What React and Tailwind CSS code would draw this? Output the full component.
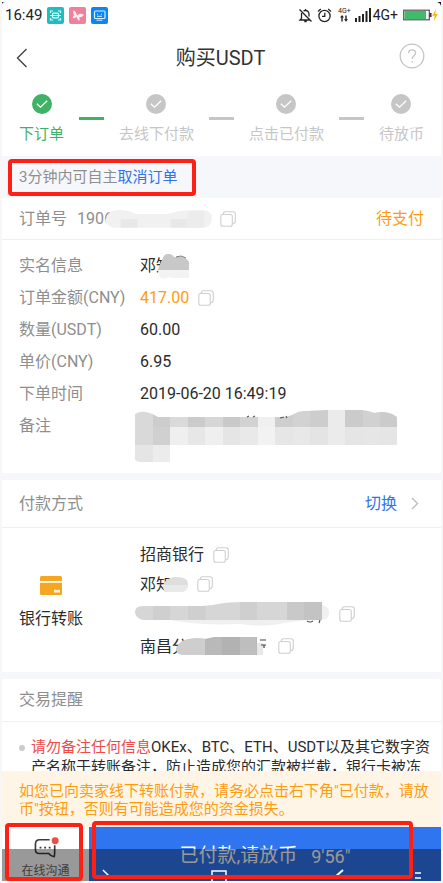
import React from 'react';

const steps = [
    { label: '下订单', done: true },
    { label: '去线下付款', done: false },
    { label: '点击已付款', done: false },
    { label: '待放币', done: false },
];

function StatusBar() {
    return (
        <div className="relative flex h-[30px] items-center justify-between pl-[3px] pr-[2px] text-[#222222]">
            <svg className="absolute left-0 top-[2px]" width="3" height="3" viewBox="0 0 3 3">
                <path d="M0 0h3Q0 0 0 3z" fill="#111" />
            </svg>
            <svg className="absolute right-0 top-[2px]" width="4" height="5" viewBox="0 0 4 5">
                <path d="M0 0h4v5Q4 1 0 0z" fill="#111" />
            </svg>
            <div className="flex items-center gap-[5px]">
                <span className="text-[15px]">16:49</span>
                <svg width="17" height="17" viewBox="0 0 17 17" fill="none">
                    <rect width="17" height="17" rx="2" fill="#1fbcc0" />
                    <path d="M3.5 6V4H6M11 4h2.500V6M13.500 11v2H11M6 13H3.500V11" stroke="#d9ffff" strokeWidth="1.200" />
                    <rect x="5.500" y="6.200" width="6" height="4.600" rx="1" stroke="#d9ffff" strokeWidth="1.200" />
                    <path d="M3 8.500h11" stroke="#d9ffff" strokeWidth="1" />
                </svg>
                <svg width="17" height="17" viewBox="0 0 17 17">
                    <rect width="17" height="17" rx="2" fill="#f0819d" />
                    <path d="M8 8.500C7.500 6 6 3.500 4.800 3.500c-1 1-.8 3.500.8 4.800-1.800.5-2.300 1.700-1.500 2.700 1.200.8 2.700 0 3.500-1.200.5 2 1.500 4 2.700 3.700.9-.8.2-2.200-.3-3.200 2.500 0 4.500-1.300 4.700-2.900-2.300-.9-4.700-.9-6.700 1.100z" fill="#ffeef3" />
                </svg>
                <svg width="17" height="17" viewBox="0 0 17 17" fill="none">
                    <rect width="17" height="17" rx="2" fill="#0c86f4" />
                    <rect x="3.500" y="4" width="10.500" height="7.500" rx="1" stroke="#d8efff" strokeWidth="1.200" />
                    <path d="M6 7.200h1M10 7.200h1M6 9.300h5M5.500 13.200h6" stroke="#d8efff" strokeWidth="1" />
                </svg>
            </div>
            <div className="flex items-center">
                <svg width="15" height="15" viewBox="0 0 15 15" fill="none" stroke="#222" strokeWidth="1.300">
                    <path d="M3.500 5v5.500L2 12h10M11 8.500V6.200C11 4 9.500 2.500 7.500 2.500c-.8 0-1.500.2-2 .6M7.500 1v1.500M6.300 13.500h2.400M1.500 1.500l12 12" />
                </svg>
                <svg className="ml-1" width="15" height="15" viewBox="0 0 15 15" fill="none" stroke="#222" strokeWidth="1.300">
                    <circle cx="7.500" cy="8" r="5.600" />
                    <path d="M7.800 4.800v3.500H5M1 3.500L3.800 1M14 3.500L11.200 1" />
                </svg>
                <div className="ml-[6px] flex flex-col items-center">
                    <span className="text-[7px] leading-[7px]">4G+</span>
                    <svg width="8" height="7" viewBox="0 0 8 7" fill="#222">
                        <path d="M2 0l2 2.500H2.700V6.500H1.300V2.500H0zM6 6.800L4 4.200h1.300V.5h1.400v3.700H8z" />
                    </svg>
                </div>
                <svg className="ml-[4px]" width="16" height="14" viewBox="0 0 16 14" fill="#222">
                    <path d="M0 10h2v4H0zM3.500 8h2v6h-2zM7 6h2v8H7zM10.500 3h2v11h-2zM14 0h2v14h-2z" />
                </svg>
                <span className="ml-[2px] text-[14px]">4G+</span>
                <svg className="ml-[5px]" width="36" height="12" viewBox="0 0 36 12">
                    <rect x=".7" y="1.200" width="25.600" height="9.600" fill="#fff" stroke="#555" strokeWidth="1.200" />
                    <rect x="1.500" y="2" width="21.500" height="8" fill="#3fbb6b" />
                    <rect x="26.500" y="4" width="2" height="4" fill="#333" />
                    <path d="M33 0l-4 6.800h2.600L30.800 12 35 5h-2.700z" fill="#fbb917" />
                </svg>
            </div>
        </div>
    );
}

function CopyButton() {
    return (
        <button type="button" aria-label="复制" className="shrink-0">
            <svg width="16" height="16" viewBox="0 0 16 16" fill="none" stroke="#cfcfcf" strokeWidth="1.100">
                <rect x=".8" y="3.500" width="11.500" height="11.700" rx="2" />
                <path d="M3.200 3.200C3.300 1.500 4 .8 5.500.8H13c1.500 0 2.300.8 2.300 2.300v6.400c0 1.800-.8 3-2.600 3.300" />
            </svg>
        </button>
    );
}

function StepIcon({ done }) {
    return (
        <svg width="20" height="20" viewBox="0 0 20 20" fill="none">
            <circle cx="10" cy="10" r="10" fill={done ? '#3fb266' : '#c6c6c6'} />
            <path d="M4.800 9.800l3.700 3.400L15.200 6.800" stroke="#fff" strokeWidth="1.300" />
        </svg>
    );
}

function NameMask() {
    return (
        <svg className="relative -ml-[14px]" width="31" height="26" viewBox="0 0 31 26">
            <path d="M0 17C1 12 3 9 4 7 5 3 7 1 10 1s5 1 6 3h8c4 1 6 3 7 5v8z" fill="#c8c8c8" />
            <path d="M18 4l5-1 5 2" fill="none" stroke="#555" strokeWidth=".8" />
            <path d="M0 17h31v8H14c-2 0-2-1-3-1-1 2-9 2-10-1z" fill="#f3f3f3" />
        </svg>
    );
}

function RemarkMask() {
    const top = ['#d9d9d9', '#cdcdcd', '#dadada', '#cbcbcb', '#d6d6d6', '#c9c9c9', '#d2d2d2', '#f0f0f0', '#cecece', '#d2d2d2', '#cdcdcd', '#ebebeb', '#cbcbcb', '#d1d1d1', '#cbcbcb'];
    const middle = ['#d9d9d9', '#d0d0d0', '#efefef', '#e7e7e7', '#efefef', '#e5e5e5', '#e9e9e9', '#f2f2f2', '#e6e6e6', '#e8e8e8', '#e4e4e4', '#ebebeb', '#e5e5e5', '#e6e6e6', '#e5e5e5'];
    return (
        <svg className="-ml-[5px]" width="263" height="52" viewBox="0 0 263 52">
            <clipPath id="remark">
                <path d="M0 4Q5 1 11 2t12 5h127c8-1 10-6 20-6l22-1h35q8 1 12 3 14-3 23 4v28H35v17H5q-5-1-5-3z" />
            </clipPath>
            <g clipPath="url(#remark)" shapeRendering="crispEdges">
                {top.map((color, i) => <rect key={i} x={i * 17.5} y="0" width="17.500" height="17" fill={color} />)}
                {middle.map((color, i) => <rect key={i} x={i * 17.5} y="17" width="17.500" height="18" fill={color} />)}
                <rect x="0" y="35" width="17.500" height="17" fill="#e5e5e5" />
                <rect x="17.500" y="35" width="17.500" height="17" fill="#ececec" />
            </g>
            <path d="M112 7l2-1M118 7l2-1M145 8l4-1M151 6l1 2" stroke="#555" strokeWidth="1.200" />
        </svg>
    );
}

function Row({ label, children }) {
    return (
        <div className="flex">
            <dt className="w-[121px] shrink-0 text-[#8e8e8e]">{label}</dt>
            <dd className="flex items-center text-[#2b2b2b]">{children}</dd>
        </div>
    );
}

function SystemNav() {
    return (
        <div className="pointer-events-none absolute inset-x-0 bottom-0 flex h-8 items-end justify-between overflow-hidden bg-black/40 pl-[18px] pr-[20px]">
            <svg width="10" height="5" viewBox="0 0 10 5" fill="none">
                <path d="M1 5Q5-1 9 5" stroke="#fff" strokeWidth="2" />
            </svg>
            <svg width="10" height="12" viewBox="0 0 10 12" fill="none">
                <path d="M2 1l6 6" stroke="#fff" strokeWidth="1.500" />
            </svg>
            <svg className="ml-7" width="16" height="12" viewBox="0 0 16 12" fill="none">
                <path d="M1 12V2h14v10" stroke="#fff" strokeWidth="1.500" />
            </svg>
            <svg className="ml-9" width="10" height="12" viewBox="0 0 10 12" fill="none">
                <path d="M9 1L1 8" stroke="#fff" strokeWidth="2" />
            </svg>
            <svg width="6" height="10" viewBox="0 0 6 10" fill="none">
                <path d="M0 2h6M0 7h6" stroke="#fff" strokeWidth="1.500" />
            </svg>
        </div>
    );
}

export default function App() {
    return (
        <div className="flex h-screen flex-col overflow-hidden border-b-2 border-l-2 border-r-2 border-[#f7f7f7] bg-white font-['Roboto','Noto_Sans_CJK_SC',sans-serif] text-base">
            <main className="min-h-0 flex-1 overflow-hidden">
                <StatusBar />
                <header className="flex h-[54px] items-center justify-between px-[14px] pt-[2px] text-[#333333]">
                    <button type="button" aria-label="返回" className="w-[26px]">
                        <svg width="12" height="20" viewBox="0 0 12 20" fill="none">
                            <path d="M10.500 1L1.500 10l9 9" stroke="#444" strokeWidth="1.400" />
                        </svg>
                    </button>
                    <h1 className="text-[20px]">购买USDT</h1>
                    <button type="button" aria-label="帮助" className="mr-[2px] -mt-1">
                        <svg width="26" height="26" viewBox="0 0 26 26" fill="none" stroke="#c4c4c4" strokeWidth="1.300">
                            <circle cx="13" cy="13" r="11.800" />
                            <path d="M9.600 10.300c0-2.300 1.500-3.500 3.500-3.500s3.500 1.300 3.500 3.200c0 2.700-3.500 2.900-3.500 6M13.100 18v1.600" />
                        </svg>
                    </button>
                </header>

                <ol className="flex h-[72px] justify-between px-[17px] pt-[10px]">
                    {steps.map((step, i) => (
                        <React.Fragment key={step.label}>
                            {i > 0 && <li aria-hidden="true" className={`mt-[23px] h-[3px] w-[25px] ${i === 1 ? 'bg-[#3fb266]' : 'bg-[#c6c6c6]'}`}></li>}
                            <li className={`flex flex-col items-center gap-[10px] text-[15px] leading-5 ${step.done ? 'text-[#3fb266]' : 'text-[#c6c6c6]'}`}>
                                <StepIcon done={step.done} />
                                <span>{step.label}</span>
                            </li>
                        </React.Fragment>
                    ))}
                </ol>

                <div className="relative flex h-[42px] items-center bg-[#f6f7fa] px-[17px] text-[15px] text-[#8e8e8e]">
                    <span>3分钟内可自主</span>
                    <a href="#cancel" className="text-[#2f73ee]">取消订单</a>
                    <div className="pointer-events-none absolute bottom-[2px] left-[6px] top-[3px] w-[188px] rounded-[4px] border-4 border-[#ff2015]"></div>
                </div>

                <section>
                    <div className="flex h-[42px] items-center justify-between border-b border-[#f0f0f0] px-[17px]">
                        <div className="flex items-center text-[#8e8e8e]">
                            <span>订单号</span>
                            <span className="ml-[10px]">1906</span>
                            <svg className="relative -ml-[8px] mr-[8px]" width="107" height="20" viewBox="0 0 109 20">
                                <path d="M0 12Q2 1 12 1q10-1 20 4h32q10-4 25-4 20-2 20 8 0 10-10 10H12Q3 19 0 12z" fill="#f1f1f1" />
                                <path d="M16 10h17v9H16zM67 10h17v9H67z" fill="#e8e8e8" />
                                <path d="M84 2h17v17H84z" fill="#ececec" />
                            </svg>
                            <CopyButton />
                        </div>
                        <span className="text-[#ff9c0d]">待支付</span>
                    </div>
                    <dl className="h-[233px] pl-[17px] pt-[10px] leading-8">
                        <Row label="实名信息">
                            <span>邓知</span>
                            <NameMask />
                        </Row>
                        <Row label="订单金额(CNY)">
                            <span className="mr-[9px] text-[#ff9c0d]">417.00</span>
                            <CopyButton />
                        </Row>
                        <Row label="数量(USDT)">60.00</Row>
                        <Row label="单价(CNY)">6.95</Row>
                        <Row label="下单时间">2019-06-20 16:49:19</Row>
                        <Row label="备注"><RemarkMask /></Row>
                    </dl>
                </section>

                <section className="border-t-[7px] border-[#f6f7fa]">
                    <div className="flex h-[48px] items-center justify-between border-b border-[#f0f0f0] pl-[17px] pr-[22px]">
                        <h2 className="text-[#8e8e8e]">付款方式</h2>
                        <button type="button" className="flex items-center gap-[14px] text-[#2f73ee]">
                            切换
                            <svg width="8" height="13" viewBox="0 0 8 13" fill="none">
                                <path d="M1 1l5.500 5.500L1 12" stroke="#bdbdbd" strokeWidth="1.400" />
                            </svg>
                        </button>
                    </div>
                    <div className="flex px-[17px] pb-[10px] pt-[11px] text-[#2b2b2b]">
                        <div className="flex w-[64px] flex-col items-center gap-3 pt-[37px]">
                            <svg width="22" height="19" viewBox="0 0 22 19">
                                <rect width="22" height="19" rx="1.500" fill="#f5a623" />
                                <path d="M0 5h22v1.800H0z" fill="#fff" />
                                <path d="M14 14.200l1.500-.6 1.500.6 1.500-.6 1.500.6v2.200h-6z" fill="#fff3dd" />
                            </svg>
                            <span className="leading-6">银行转账</span>
                        </div>
                        <ul className="ml-[57px] leading-[31px]">
                            <li className="flex items-center gap-[9px]">
                                招商银行
                                <CopyButton />
                            </li>
                            <li className="flex h-[28px] items-center">
                                <span>邓知</span>
                                <svg className="relative -ml-[9px] mr-[9px]" width="25" height="16" viewBox="0 0 25 16">
                                    <path d="M0 9Q3 2 11 1q14-1 14 7t-8 8H4Q0 15 0 9z" fill="#dedede" />
                                    <path d="M0 9h25q-1 7-8 7H4Q0 15 0 9z" fill="#e9e9e9" />
                                </svg>
                                <CopyButton />
                            </li>
                            <li className="-ml-[5px] flex h-8 items-center gap-[9px]">
                                <svg width="195" height="26" viewBox="0 0 195 26">
                                    <path d="M30 18h150q-16 2-30 4-20 5-45 1Q60 25 30 18zM187 4q8 2 7 8 0 6-7 7z" fill="#f0f0f0" />
                                    <path d="M0 11Q0 5 8 5h42q10 1 28-1 12-3 30-3h79v18H8q-8-2-8-8z" fill="#d6d6d6" />
                                    <path d="M18 5h17v14H18zM53 5h18v14H53zM105 1h17v18h-17z" fill="#cfcfcf" />
                                    <path d="M152 1h17v18h-17z" fill="#c9c9c9" />
                                    <path d="M169 1h18v18h-18z" fill="#c3c3c3" />
                                    <path d="M172 20q3 2 6 0M185 19l-1 3" fill="none" stroke="#555" strokeWidth="1.200" />
                                </svg>
                                <CopyButton />
                            </li>
                            <li className="flex h-8 items-center">
                                <span>南昌分</span>
                                <svg className="relative -ml-[12px] mr-[10px]" width="92" height="18" viewBox="0 0 92 18">
                                    <path d="M0 11Q4 3 12 2q10-2 18 0v16H6Q0 17 0 11z" fill="#cecece" />
                                    <path d="M29 2l9-2h43v18H29z" fill="#b9b9b9" />
                                    <path d="M46 0h18v18H46z" fill="#b2b2b2" />
                                    <path d="M64 0h16v18H64z" fill="#bebebe" />
                                    <path d="M81 6h6v12h-6z" fill="#e8e8e8" />
                                    <path d="M84 3h6M85 8h5M88 8v3" stroke="#444" strokeWidth="1.200" />
                                </svg>
                                <CopyButton />
                            </li>
                        </ul>
                    </div>
                </section>

                <section className="border-t-[7px] border-[#f6f7fa]">
                    <h2 className="flex h-[43px] items-center border-b border-[#f0f0f0] px-[17px] text-[#8e8e8e]">交易提醒</h2>
                    <ul className="px-[17px] pt-[15px] text-[15px] leading-5 text-[#2b2b2b]">
                        <li className="flex gap-[6px]">
                            <span className="mt-2 h-[6px] w-[6px] shrink-0 rounded-full bg-[#cccccc]"></span>
                            <p className="whitespace-nowrap">
                                <span className="text-[#ee4b4b]">请勿备注任何信息</span>OKEx、BTC、ETH、USDT以及其它数字资<br />
                                产名称于转账备注，防止造成您的汇款被拦截，银行卡被冻
                            </p>
                        </li>
                    </ul>
                </section>
            </main>

            <footer className="relative shrink-0">
                <p className="h-[56px] whitespace-nowrap bg-[#fff5e6] px-[17px] pt-[11px] text-[15px] leading-[18px] text-[#ff9c0d]">
                    如您已向卖家线下转账付款，请务必点击右下角"已付款，请放<br />
                    币"按钮，否则有可能造成您的资金损失。
                </p>
                <div className="flex h-[54px]">
                    <button type="button" className="flex w-[87px] flex-col items-center gap-[2px] pt-[10px] text-[12px] leading-5 text-[#666666]">
                        <svg width="28" height="24" viewBox="0 0 28 24" fill="none">
                            <path d="M18 3H7Q2.500 3 2.500 8v6q0 4 4 4H17q2 3 6 3.500.500-3 .5-7V9" stroke="#3c3c3c" strokeWidth="1.800" strokeLinejoin="round" />
                            <path d="M7 11.500h2M12 11.500h2M17 11.500h2" stroke="#3c3c3c" strokeWidth="2" />
                            <circle cx="24" cy="4" r="3.800" fill="#ee4b4b" />
                        </svg>
                        在线沟通
                    </button>
                    <button type="button" className="flex flex-1 items-center justify-center gap-[14px] bg-[#2f75f0] pt-1 text-[19px] text-white">
                        <span>已付款,请放币</span>
                        <span className="text-[18px]">9'56"</span>
                    </button>
                </div>
                <SystemNav />
                <div className="pointer-events-none absolute bottom-0 left-[3px] h-[58px] w-[78px] rounded-[4px] border-4 border-[#ff2015]"></div>
                <div className="pointer-events-none absolute bottom-[2px] left-[90px] right-[28px] h-[58px] rounded-[4px] border-4 border-[#ff2015]"></div>
            </footer>
        </div>
    );
}
